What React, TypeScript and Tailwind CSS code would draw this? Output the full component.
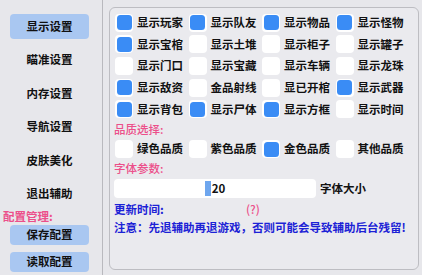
import React from 'react';

const font = { fontFamily: '"Noto Sans CJK SC", "Noto Sans", sans-serif' };

const navItems = ['显示设置', '瞄准设置', '内存设置', '导航设置', '皮肤美化', '退出辅助'];

const toggles: [string, boolean][] = [
  ['显示玩家', true], ['显示队友', true], ['显示物品', true], ['显示怪物', true],
  ['显示宝棺', true], ['显示土堆', false], ['显示柜子', false], ['显示罐子', false],
  ['显示门口', false], ['显示宝藏', false], ['显示车辆', false], ['显示龙珠', false],
  ['显示敌资', true], ['金品射线', false], ['显已开棺', false], ['显示武器', true],
  ['显示背包', true], ['显示尸体', true], ['显示方框', true], ['显示时间', false],
];

const qualities: [string, boolean][] = [
  ['绿色品质', false], ['紫色品质', false], ['金色品质', true], ['其他品质', false],
];

const Check: React.FC<{ label: string; checked: boolean }> = ({ label, checked }) => (
  <div className="flex items-center gap-[4px] h-full">
    <div className="w-[18px] h-[18px] rounded-[4px] bg-white p-[1.5px] shrink-0">
      {checked && <div className="w-full h-full rounded-[3.5px] bg-[#3a8cf5]" />}
    </div>
    <span className="text-[11.5px] font-bold text-[#111] leading-none whitespace-nowrap">{label}</span>
  </div>
);

export default function App() {
  return (
    <div className="w-[422px] h-[275px] flex bg-[#e7e7eb] overflow-hidden" style={font}>
      <div className="w-[103px] h-full flex flex-col border-r border-[#b9b9be] shrink-0">
        <div className="flex flex-col gap-[8.5px] mt-[14px]">
          {navItems.map((item, i) => (
            <div
              key={item}
              className={
                'ml-[10px] w-[79px] h-[25px] flex items-center justify-center rounded-[4px] text-[11.5px] font-bold text-[#111] ' +
                (i === 0 ? 'bg-[#a9c7f1]' : '')
              }
            >
              {item}
            </div>
          ))}
        </div>
        <div className="mt-[2px] h-[16px] pl-[3px] flex items-center text-[11.5px] font-bold text-[#ec4f8a]">
          配置管理:
        </div>
        <div className="flex flex-col gap-[7px] mt-[0.5px]">
          <div className="ml-[10px] w-[79px] h-[20px] flex items-center justify-center rounded-[4px] bg-[#a9c7f1] text-[11.5px] font-bold text-[#111]">
            保存配置
          </div>
          <div className="ml-[10px] w-[79px] h-[20px] flex items-center justify-center rounded-[4px] bg-[#a9c7f1] text-[11.5px] font-bold text-[#111]">
            读取配置
          </div>
        </div>
      </div>

      <div className="ml-[6px] mt-[7px] w-[310px] h-[263px] border border-[#bdbdc2] rounded-[6px] bg-[#eaeaee] pl-[5px] pt-[4px] flex flex-col">
        <div className="grid grid-cols-[73.5px_73.5px_73.5px_73.5px] auto-rows-[21.67px]">
          {toggles.map(([label, checked]) => (
            <Check key={label} label={label} checked={checked} />
          ))}
        </div>
        <div className="h-[18px] flex items-center text-[11.5px] font-medium text-[#ec4f8a] -ml-[1px]">品质选择:</div>
        <div className="grid grid-cols-[73.5px_73.5px_73.5px_73.5px] h-[21.67px]">
          {qualities.map(([label, checked]) => (
            <Check key={label} label={label} checked={checked} />
          ))}
        </div>
        <div className="h-[18px] flex items-center text-[11.5px] font-medium text-[#ec4f8a] -ml-[1px]">字体参数:</div>
        <div className="mt-[1px] flex items-center gap-[4px]">
          <div className="w-[202px] h-[19px] -ml-[1px] bg-white rounded-[4px] flex items-center justify-center">
            <span className="w-[6px] h-[15px] bg-[#6ea6ee]" />
            <span className="text-[11.5px] font-bold text-[#111] leading-none ml-[1px]">20</span>
          </div>
          <span className="text-[11.5px] font-bold text-[#111]">字体大小</span>
        </div>
        <div className="mt-[3px] h-[18px] flex items-center text-[11.5px] font-bold -ml-[1px]">
          <span className="w-[132px] text-[#1c22d6]">更新时间:</span>
          <span className="text-[#ec4f8a] font-medium">(?)</span>
        </div>
        <div className="h-[18px] flex items-center text-[11.5px] font-bold text-[#1c22d6] -ml-[1px] whitespace-nowrap">
          注意：先退辅助再退游戏，否则可能会导致辅助后台残留!
        </div>
      </div>
    </div>
  );
}
